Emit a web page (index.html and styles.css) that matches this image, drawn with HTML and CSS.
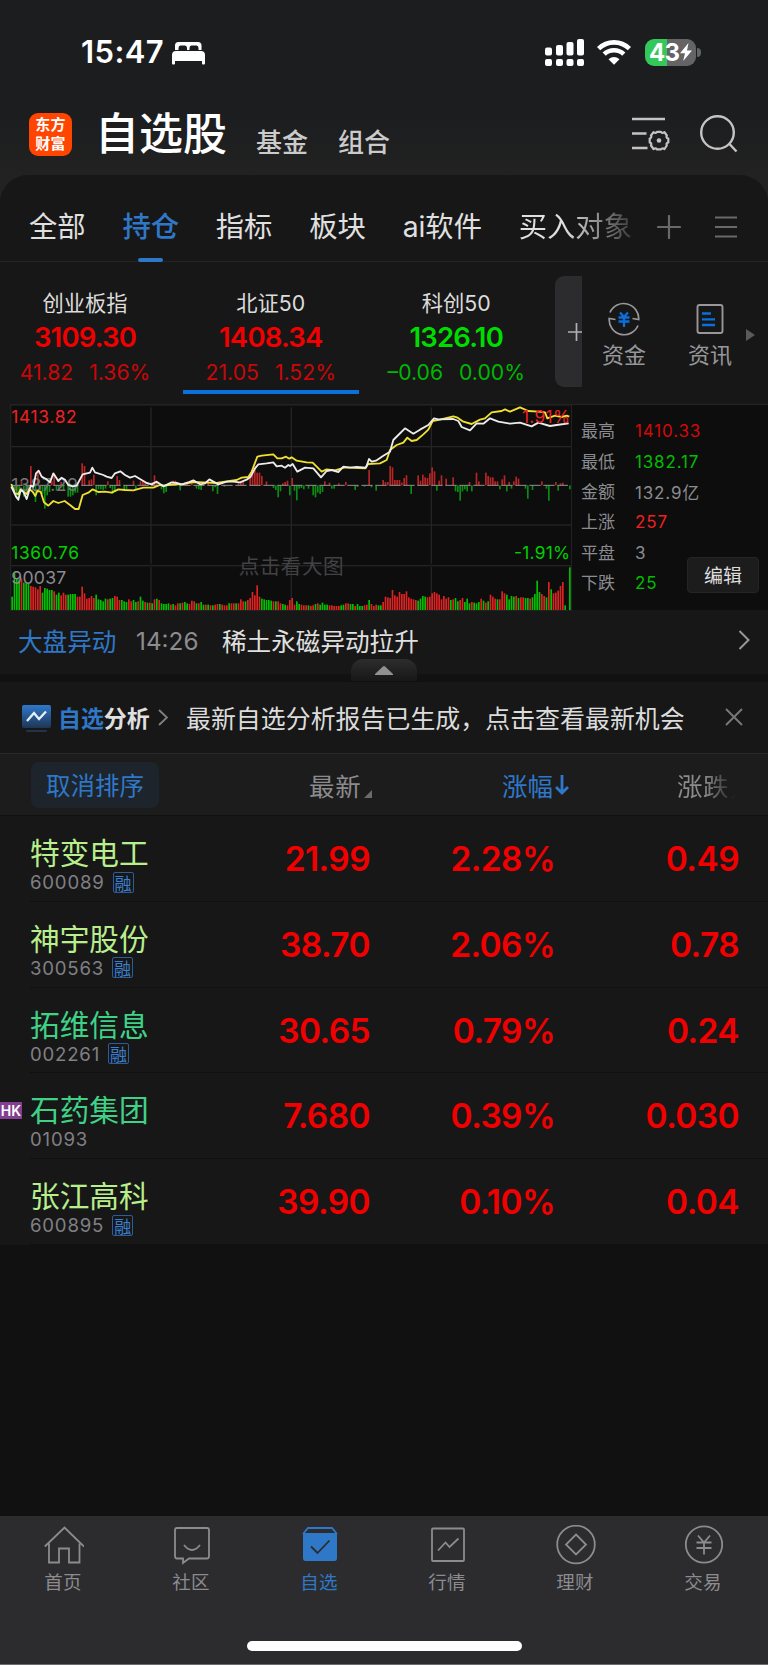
FILE: index.html
```html
<!DOCTYPE html>
<html lang="zh-CN">
<head>
<meta charset="utf-8">
<title>自选股</title>
<link rel="stylesheet" href="styles.css">
</head>
<body>
<div class="top">
  <div class="status">
    <span class="time">15:47</span>
    <svg class="bed" viewBox="0 0 33 23" width="33" height="23"><path fill="#fff" d="M3 8V3.500Q3 0 6.500 0H26Q29.500 0 29.500 3.500V8H26.500V6Q26.500 3.500 24.500 3.500H19.500Q17.500 3.500 17.500 6V8H15V6Q15 3.500 13 3.500H8.500Q6.500 3.500 6.500 6V8ZM4 9H29Q33 9 33 13V21.500Q33 22.500 32 22.500H31Q30 22.500 30 21.500V19H3V21.500Q3 22.500 2 22.500H1Q0 22.500 0 21.500V13Q0 9 4 9Z"/></svg>
    <svg class="signal" viewBox="0 0 39 27" width="39" height="27" fill="#fff"><rect x="0" y="8.500" width="7" height="8" rx="2"/><rect x="11" y="6" width="7" height="10.500" rx="2"/><rect x="21.500" y="3" width="7" height="13.500" rx="2"/><rect x="32" y="0" width="7" height="16.500" rx="2"/><rect x="0" y="20" width="7" height="7" rx="2"/><rect x="11" y="20" width="7" height="7" rx="2"/><rect x="21.500" y="20" width="7" height="7" rx="2"/><rect x="32" y="20" width="7" height="7" rx="2"/></svg>
    <svg class="wifi" viewBox="0 0 34 25" width="34" height="25"><g fill="none" stroke="#fff" stroke-width="4.600"><path d="M1.600 8.700Q8 2.400 17 2.400T32.400 8.700"/><path d="M7.200 14.200Q11.200 10.300 17 10.300T26.800 14.200"/></g><path fill="#fff" d="M11.500 19.200Q17 14.800 22.500 19.200L17 24.800Z"/></svg>
    <div class="battery"><span>43</span><svg viewBox="0 0 12 18" width="12" height="18"><path fill="#fff" d="M8.500 0L0 10.300H5L3.200 18L12 7.400H7Z"/></svg></div>
    <i class="nub"></i>
  </div>
  <div class="header">
    <div class="logo">东方<br>财富</div>
    <div class="title">自选股</div>
    <div class="sub">基金</div>
    <div class="sub">组合</div>
    <svg class="setico" viewBox="0 0 38 34" width="38" height="34" fill="none" stroke="#c4c4c4" stroke-width="2.400"><path d="M0 2H33M0 16.500H14.500M0 31H15.500"/><path stroke-width="2.200" stroke-linejoin="round" d="M21.500 15.200Q24 16.700 25 14.800H29Q30.300 16.700 32.500 15.200L34.800 18.500Q33.800 20.800 36.300 21.600V25.400Q33.800 26 34.800 28.500L32.500 32Q30.300 30.500 29 32.400H25Q24 30.500 21.500 32L19 28.500Q20 26 17.700 25.400V21.600Q20 20.800 19 18.500Z"/><circle cx="27" cy="23.500" r="2.300" fill="#c4c4c4" stroke="none"/></svg>
    <svg class="search" viewBox="0 0 38 38" width="38" height="38" fill="none" stroke="#c4c4c4" stroke-width="2.400"><circle cx="17.500" cy="17.500" r="16.300"/><path d="M29 28.500L36.500 36.500"/></svg>
  </div>
</div>
<div class="panel">
  <div class="tabs">
    <span>全部</span><span class="on">持仓</span><span>指标</span><span>板块</span><span>ai软件</span><span class="fade">买入对象</span>
    <svg class="plus" viewBox="0 0 24 24" width="24" height="24" stroke="#69696b" stroke-width="2.200" stroke-linecap="round"><path d="M1 12H23M12 1V23"/></svg>
    <svg class="menu" viewBox="0 0 22 22" width="22" height="22" stroke="#69696b" stroke-width="2.200"><path d="M0 1.500H22M0 11H22M0 20.500H22"/></svg>
  </div>
  <div class="indices">
    <div class="idx up"><b>创业板指</b><strong>3109.30</strong><p><span>41.82</span><span>1.36%</span></p></div>
    <div class="idx up sel"><b>北证50</b><strong>1408.34</strong><p><span>21.05</span><span>1.52%</span></p></div>
    <div class="idx down"><b>科创50</b><strong>1326.10</strong><p><span>–0.06</span><span>0.00%</span></p></div>
    <div class="addbox"><svg viewBox="0 0 14 18" width="14" height="18" stroke="#b0b0b2" stroke-width="1.700"><path d="M0 9H14M8.500 0V18"/></svg></div>
    <div class="tool"><svg viewBox="0 0 34 34" width="34" height="34" fill="none" stroke="#98989a" stroke-width="1.700"><path d="M3 10.500A15 15 0 0 1 31.700 17.500L25.500 16.500M31 23.500A15 15 0 0 1 2.200 16.500L8.500 17.500"/><path stroke="#0b6fdc" stroke-width="2.300" d="M13 10.500L17 15L21 10.500M11.500 15.500H22.500M11.500 19.500H22.500M17 15V25"/></svg><span>资金</span></div>
    <div class="tool second"><svg viewBox="0 0 34 34" width="34" height="34" fill="none" stroke="#98989a" stroke-width="1.900"><rect x="4.500" y="3" width="25" height="28" rx="2"/><path stroke="#0b6fdc" stroke-width="2.300" d="M9 11.500H18M9 17.300H22M9 23H22"/></svg><span>资讯</span></div>
    <svg class="more" viewBox="0 0 9 12" width="9" height="12"><path fill="#5a5a5c" d="M0 0L9 6L0 12Z"/></svg>
  </div>
  <div class="market">
    <svg id="chart" class="chart" viewBox="30 27 1686 621" width="562" height="207"></svg>
    <div class="stats">
      <div><span>最高</span><em class="r">1410.33</em></div>
      <div><span>最低</span><em class="g">1382.17</em></div>
      <div><span>金额</span><em>132.9亿</em></div>
      <div><span>上涨</span><em class="r2">257</em></div>
      <div><span>平盘</span><em>3</em></div>
      <div><span>下跌</span><em class="g">25</em></div>
      <button class="edit">编辑</button>
    </div>
  </div>
  <div class="news">
    <span class="tag">大盘异动</span><span class="at">14:26</span><span class="txt">稀土永磁异动拉升</span>
    <svg class="chev" viewBox="0 0 12 20" width="12" height="20" fill="none" stroke="#98989a" stroke-width="2"><path d="M1.500 1L10.500 10L1.500 19"/></svg>
    <div class="handle"><svg viewBox="0 0 18 9" width="18" height="9"><path fill="#919193" d="M0 9V8L8 .5Q9 -.4 10 .5L18 8V9Z"/></svg></div>
  </div>
  <div class="analysis">
    <svg class="aico" viewBox="0 0 29 28" width="29" height="28"><defs><linearGradient id="ag" x2="0" y2="1"><stop stop-color="#2f78cc"/><stop offset="1" stop-color="#1e3552"/></linearGradient></defs><rect width="29" height="23" rx="2" fill="url(#ag)"/><rect x="4" y="25" width="21" height="2" rx="1" fill="#20354b"/><path d="M5 16L12 8L17 14L24 6.500" fill="none" stroke="#e8eef5" stroke-width="2.300"/></svg>
    <span class="name"><i>自选</i>分析</span>
    <svg class="chev2" viewBox="0 0 10 17" width="10" height="17" fill="none" stroke="#808082" stroke-width="1.900"><path d="M1 1L9 8.500L1 16"/></svg>
    <span class="msg">最新自选分析报告已生成，点击查看最新机会</span>
    <svg class="close" viewBox="0 0 18 18" width="18" height="18" stroke="#77777a" stroke-width="2"><path d="M1 1L17 17M17 1L1 17"/></svg>
  </div>
  <div class="cols">
    <span class="cancel">取消排序</span>
    <span class="c1">最新<svg viewBox="0 0 8 8" width="8" height="8"><path fill="#6b6b6d" d="M8 0V8H0Z"/></svg></span>
    <span class="c2">涨幅<svg viewBox="0 0 14 20" width="14" height="20" fill="none" stroke="#2f78cc" stroke-width="2.800"><path d="M7 0V18M1 12L7 18L13 12"/></svg></span>
    <span class="c3">涨跌<svg viewBox="0 0 8 8" width="8" height="8"><path fill="#6b6b6d" d="M8 0V8H0Z"/></svg></span>
  </div>
  <div class="row"><div class="stock"><b>特变电工</b><p>600089<i>融</i></p></div><span>21.99</span><span>2.28%</span><span>0.49</span></div>
  <div class="row"><div class="stock"><b>神宇股份</b><p>300563<i>融</i></p></div><span>38.70</span><span>2.06%</span><span>0.78</span></div>
  <div class="row"><div class="stock alt"><b>拓维信息</b><p>002261<i>融</i></p></div><span>30.65</span><span>0.79%</span><span>0.24</span></div>
  <div class="row"><u class="hk">HK</u><div class="stock alt"><b>石药集团</b><p>01093</p></div><span>7.680</span><span>0.39%</span><span>0.030</span></div>
  <div class="row"><div class="stock"><b>张江高科</b><p>600895<i>融</i></p></div><span>39.90</span><span>0.10%</span><span>0.04</span></div>
</div>
<div class="dock">
  <div class="items">
    <div><svg viewBox="0 0 40 40" width="40" height="40"><path d="M.800 21.500L20.500 2.500L40 21.500M5 18.500V37.500H15V23.500H25V37.500H35.500V18.500"/></svg><span>首页</span></div>
    <div><svg viewBox="0 0 40 40" width="40" height="40"><path d="M5 3H35Q37 3 37 5V31Q37 33.500 35 33.500H17L11 38V33.500H5Q3 33.500 3 31V5Q3 3 5 3Z"/><path d="M12 20Q20 30 28 20"/></svg><span>社区</span></div>
    <div class="on"><svg viewBox="0 0 40 40" width="40" height="40"><path d="M3 9L8 3H32L37 9"/><path d="M3 8H37V33Q37 36 34.500 36H5.500Q3 36 3 33Z" fill="#2f78c8" stroke="none"/><path d="M11 21.500L17.500 28L29.500 15.500" stroke="#2c2c2e"/></svg><span>自选</span></div>
    <div><svg viewBox="0 0 40 40" width="40" height="40"><rect x="4" y="3.500" width="32" height="32.500" rx="1"/><path d="M10 25.500L17.500 17.500L21.500 22L30.500 13.500"/></svg><span>行情</span></div>
    <div><svg viewBox="0 0 40 40" width="40" height="40"><circle cx="20" cy="19.500" r="18.800"/><path d="M20 9.500L30 19.500L20 29.500L10 19.500Z"/></svg><span>理财</span></div>
    <div><svg viewBox="0 0 40 40" width="40" height="40"><circle cx="20" cy="19.500" r="18.200"/><path d="M14 10.500L20 17.500L26 10.500M12.500 17.500H27.500M12.500 23H27.500M20 17.500V29.500"/></svg><span>交易</span></div>
  </div>
  <div class="home"></div>
</div>
<script src="chart.js"></script>
</body>
</html>
```
FILE: styles.css
```css
* { box-sizing: border-box; }
body { margin: 0; width: 768px; height: 1665px; display: flex; flex-direction: column; overflow: hidden; background: #111; color: #e0e0e0; font-family: Inter, "Noto Sans CJK SC", sans-serif; }
p { margin: 0; }
b, strong, i, em, u { font-weight: 400; font-style: normal; text-decoration: none; }
svg { display: block; flex: none; }
span, b { white-space: nowrap; }
.top { height: 203px; flex: none; background: linear-gradient(#1c1d1f, #1c1d1f 55%, #222222 88%); }
.status { height: 104px; display: flex; padding: 0 0 0 81px; align-items: center; }
.time { width: 91px; font-size: 31px; font-weight: 600; color: #fff; line-height: 36px; letter-spacing: .4px; }
.bed { margin-top: 2px; }
.signal { margin-left: 340px; }
.wifi { margin-left: 13px; }
.battery { margin-left: 14px; width: 51px; height: 27px; border-radius: 9px; background: linear-gradient(90deg, #34c759 43%, #646466 43%); display: flex; align-items: center; padding-left: 4px; color: #fff; font-size: 24px; font-weight: 700; line-height: 27px; }
.battery span { width: 31px; letter-spacing: -.8px; }
.nub { width: 4px; height: 9px; margin-left: 1px; background: #646466; border-radius: 0 4px 4px 0; }
.header { height: 71px; display: flex; padding-left: 29px; align-items: flex-start; }
.logo { margin-top: 9px; width: 43px; height: 43px; border-radius: 9px; background: #ff4500; color: #fff; font-size: 15px; font-weight: 700; line-height: 18.500px; text-align: center; padding-top: 3px; letter-spacing: .3px; }
.title { margin: -3px 0 0 23px; width: 135px; font: 500 44px/60px "Noto Sans CJK SC", sans-serif; color: #fff; white-space: nowrap; }
.sub { margin: 17px 0 0 26px; width: 56px; font: 500 26px/40px "Noto Sans CJK SC", sans-serif; color: #cbcbcb; }
.setico { margin: 13px 0 0 238px; }
.search { margin: 11px 0 0 30px; }
.panel { margin-top: -28px; background: #171717; border-radius: 28px 28px 0 0; flex: none; height: 1070px; }
.tabs { height: 87px; display: flex; align-items: center; gap: 36.800px; padding: 17px 0 0 29px; border-bottom: 1px solid #242424; font: 400 28.300px/40px Inter, "Noto Sans CJK SC", sans-serif; }
.tabs .on { color: #2f78c8; font-weight: 500; position: relative; }
.tabs .on::after { content: ""; position: absolute; left: 16px; bottom: -15px; width: 25px; height: 4px; border-radius: 2px; background: #2f78c8; }
.fade { background: linear-gradient(90deg, #e0e0e0 40%, #3a3a3a); -webkit-background-clip: text; background-clip: text; color: transparent; }
.plus { margin-left: -12px; }
.menu { margin-left: -3px; }
.indices { height: 142px; display: flex; }
.idx { width: 185.500px; display: flex; flex-direction: column; align-items: center; padding-top: 26px; position: relative; }
.idx:first-child { width: 170px; margin-right: 8px; }
.idx b { font-size: 21.300px; line-height: 30px; color: #dcdcdc; }
.idx strong { font-size: 27.500px; font-weight: 600; line-height: 34px; margin-top: 2px; letter-spacing: -.8px; }
.idx p { font-size: 21.200px; line-height: 26px; margin-top: 5px; display: flex; gap: 16px; }
.up { color: #f00000; } .up p { color: #c80808; }
.down { color: #00dc00; } .down p { color: #00b800; }
.sel::after { content: ""; position: absolute; left: 5px; top: 128px; width: 176px; height: 4px; background: #0b6fdc; }
.addbox { margin: 14px 0 0 6px; width: 27px; height: 111px; border-radius: 9px 0 0 9px; background: #2c2c2e; display: flex; align-items: center; justify-content: flex-end; }
.tool { margin-left: 18px; width: 48px; padding-top: 40px; display: flex; flex-direction: column; align-items: center; font-size: 22px; line-height: 32px; color: #98989a; }
.tool span { margin-top: 3px; }
.tool.second { margin-left: 38px; }
.more { margin: 67px 0 0 12px; }
.market { height: 206px; display: flex; background: linear-gradient(#0d0d0d, #0d0d0d) 10px 0 / 758px 206px no-repeat; padding-left: 10px; }
.stats { position: relative; padding-top: 11px; border-top: 1px solid #242424; flex: 1; }
.stats div { display: flex; height: 30.400px; align-items: center; padding-left: 9px; font-size: 17px; color: #8b8b90; }
.stats span { width: 54px; margin-top: -3px; }
.stats em { letter-spacing: .85px; }
.r { color: #d40808; } .r2 { color: #ee2020; } .g { color: #00bf00; }
.edit { position: absolute; left: 115px; top: 152px; width: 72px; height: 36px; border: 1px solid #252525; border-radius: 4px; background: #1c1c1c; color: #dedede; font: 19px/32px "Noto Sans CJK SC", sans-serif; padding: 0; }
.news { height: 72px; padding: 0 18px 4px 18px; display: flex; align-items: center; font-size: 24.600px; border-bottom: 8px solid #111; position: relative; }
.tag { color: #2f78c8; width: 118px; }
.at { color: #8b8b90; width: 86px; font-size: 24.300px; margin-top: 2px; }
.chev { margin-left: auto; }
.handle { position: absolute; left: 351px; top: 49px; width: 66px; height: 22px; border-radius: 12px 12px 0 0; background: linear-gradient(#2d2d2e, #171717); display: flex; justify-content: center; padding-top: 7px; }
.analysis { height: 71px; padding: 0 0 1px 22px; display: flex; align-items: center; }
.aico { margin-top: 4px; }
.name { margin-left: 7px; width: 100px; font-size: 22.900px; font-weight: 700; }
.name i { font-weight: 700; color: #2f78c8; }
.msg { margin-left: 18px; width: 539px; font-size: 24.950px; color: #dcdcdc; }
.cols { height: 63px; background: #1c1c1c; border-top: 1px solid #292929; border-bottom: 1px solid #111; display: flex; align-items: center; padding-left: 31px; font-size: 25.500px; color: #8b8b8d; }
.cols > span { display: flex; align-items: center; }
.cancel { width: 128px; height: 46px; border-radius: 8px; background: #1d242c; color: #2f78c8; font-size: 24.500px; justify-content: center; }
.c1 { width: 64px; margin-left: 150px; letter-spacing: .8px; }
.c1 svg, .c3 svg { margin: 18px 0 0 2px; }
.c2 { width: 67px; margin-left: 129px; color: #2f78c8; }
.c2 svg { margin: 0 0 0 2px; }
.c3 { margin-left: 108px; letter-spacing: .5px; -webkit-mask-image: linear-gradient(90deg, #000 45%, transparent 95%); mask-image: linear-gradient(90deg, #000 45%, transparent 95%); }
.row { height: 85.800px; display: flex; position: relative; padding-left: 30px; background: linear-gradient(#101010, #101010) 30px 100% / 738px 1px no-repeat; }
.row > span { width: 184px; text-align: right; color: #f00000; font-size: 33.500px; font-weight: 600; line-height: 44px; padding-top: 21px; letter-spacing: -.6px; }
.row > span:nth-last-child(2) { width: 185px; }
.stock { width: 156px; padding-top: 16px; }
.stock b { display: block; font-size: 29.700px; line-height: 42px; color: #b8ee8c; }
.stock p { display: flex; align-items: center; font-size: 18.600px; line-height: 22px; letter-spacing: .8px; color: #808085; margin-top: -3px; }
.stock i { margin-left: 8px; width: 21px; height: 21px; border: 1px solid #2d5d98; border-radius: 2px; font: 17px/19px "Noto Sans CJK SC", sans-serif; color: #3a80d2; letter-spacing: 0; text-align: center; }
.alt b { color: #3fd287; }
.hk { position: absolute; left: 0; top: 29px; width: 22px; height: 17px; background: #843f92; color: #fff; font-size: 14px; line-height: 17px; font-weight: 600; text-align: center; }
.dock { margin-top: auto; height: 149px; flex: none; background: #2c2c2e; border-bottom: 1px solid #6c6c6e; display: flex; flex-direction: column; align-items: center; }
.items { width: 768px; height: 125px; display: flex; }
.items div { width: 128px; padding-top: 9px; display: flex; flex-direction: column; align-items: center; color: #8b8b90; font-size: 18.500px; line-height: 28px; }
.items svg { fill: none; stroke: #8b8b90; stroke-width: 1.800; }
.items .on { color: #2f78c8; }
.items .on svg { stroke: #2f78c8; }
.items span { margin: 3px 2px 0 0; letter-spacing: .3px; }
.home { width: 275px; height: 10px; border-radius: 5px; background: #fff; }
```
FILE: chart.js
```js
const svg = document.getElementById("chart");
let out = "";
const rect = (x, y, w, h, f) => { out += `<rect x="${x}" y="${y}" width="${w}" height="${h}" fill="${f}"/>`; };
const text = (x, y, s, w, f, size) => { out += `<text x="${x}" y="${y}" textLength="${w}" fill="${f}" font-size="${size}">${s}</text>`; };

// frame and grid
rect(30, 27, 1686, 5, "#222");
rect(30, 27, 4, 621, "#222");
rect(1713, 27, 3, 621, "#222");
rect(30, 645, 1686, 3, "#222");
[153, 388, 510].forEach(y => rect(34, y, 1680, 4, "#242426"));
[451, 872, 1292].forEach(x => { rect(x, 37, 4, 470, "#242426"); rect(x, 516, 4, 130, "#242426"); });
text(716, 536, "点击看大图", 315, "#424244", 62);

// traded volume, one bar per minute
const vol = [40,110,95,92,95,82,80,78,72,70,68,62,72,52,66,64,60,60,56,46,52,44,52,46,46,48,48,48,40,40,70,50,34,36,42,36,46,32,30,26,34,32,34,36,42,40,30,30,26,24,32,26,30,24,26,40,28,24,22,22,20,32,34,30,20,18,18,20,16,18,14,20,20,22,24,20,18,28,26,20,20,24,16,16,16,14,14,16,18,18,16,14,14,20,20,20,20,20,32,26,26,30,36,54,44,74,40,34,32,30,30,28,26,26,26,20,18,16,14,30,36,16,26,18,16,14,14,14,12,14,18,20,16,22,16,16,14,14,12,12,12,14,16,20,20,18,18,12,18,12,12,14,16,30,18,12,16,14,14,24,40,38,36,60,44,40,54,48,48,56,38,34,32,30,28,34,42,40,38,40,50,54,50,46,32,42,34,38,30,32,36,26,30,36,24,34,20,24,22,20,24,34,28,22,26,46,40,34,32,32,56,50,46,32,42,40,42,36,38,38,36,36,34,38,48,88,54,48,42,38,84,62,50,52,58,72,84,14,0,128];
const cols = "GGGGRGGGRRRRRGGGGGRGGRRRGGGGRRRRRRRRGGGGGRGGRRRGGGRRGGRGGRGRGRGRGGGGRGRRGRGGRRRGRGGRGRGRRGRRRGRRGRRRGRRRRRRGGGGGRGRRGGRRRRGGRRRGRRGRGGGGRRRRRGGRRGGRGGGRRGRRRGGRRRRRRRRRRRRRRRGGGGRRRRRRRRRRGRGGRRGGGRGGGRGRGRRRGRRRGGGGRGRRGGRGGGGRRGRGRRRRRGGGGRGRRRGG";
vol.forEach((h, i) => rect(34 + i * 7, 645 - h, 5, h, cols[i] === "G" || i === 239 ? "#00c000" : "#dd2222"));

// momentum bars around the previous close
const mom = {1:-14,2:-40,3:-30,4:12,5:-34,6:-20,8:58,9:-14,10:-50,11:40,12:-14,13:-26,14:-70,15:-30,16:-20,17:12,18:35,19:-16,20:-12,21:10,22:-14,24:-34,25:-34,26:-30,27:-22,28:-22,30:66,31:58,33:15,34:18,35:32,36:-30,37:-12,38:-12,39:-14,40:-10,41:12,42:-8,43:-25,44:-20,45:28,46:16,48:-12,49:-14,52:14,53:-12,55:12,56:14,57:8,60:10,61:30,62:8,64:-12,65:-24,66:-20,69:14,70:14,72:-15,75:12,77:14,79:-10,80:-12,81:-14,84:14,86:-18,87:-6,88:-26,91:-4,97:8,98:10,99:10,102:34,103:44,104:50,105:38,106:38,107:28,109:12,112:-8,113:-14,114:-36,115:-18,116:6,117:10,118:14,119:-30,120:22,121:-16,122:-45,123:-10,124:-8,125:-12,127:-10,129:-30,130:-36,131:-22,132:-26,133:-20,134:12,136:8,137:-10,138:-10,140:6,143:10,147:-14,148:-5,151:-4,153:46,154:-6,156:-16,159:16,160:10,161:10,162:58,163:54,164:16,165:16,166:16,167:8,168:22,169:30,171:-26,174:30,175:14,176:32,177:24,178:22,179:36,180:54,181:42,182:-16,183:14,184:30,186:20,189:24,190:-18,191:-20,192:-46,193:-18,194:-12,195:-18,196:10,197:-18,199:38,200:12,203:38,204:28,205:24,206:24,207:12,208:12,209:-12,210:18,211:30,212:-18,213:10,214:-10,215:12,216:26,217:20,220:-10,221:-40,223:-14,227:12,229:-10,230:-46,233:10,234:-16,235:6,236:8,239:-12};
Object.entries(mom).forEach(([i, h]) => rect(34 + i * 7, h > 0 ? 271 - h : 271, 5, Math.abs(h), h > 0 ? "#b82424" : "#0a8c14"));
out += '<path d="M34 271H1704" stroke="#919194" stroke-width="3" stroke-dasharray="34 8" fill="none"/>';
text(34, 289, "1387.29", 200, "#747479", 53);

const line = (a, b, color) => {
  const left = a.trim().split(" ");
  const right = b.trim().split(" ").map(p => { const [x, y] = p.split(","); return (+x + 870) + "," + y; });
  out += `<polyline points="${left.concat(right).join(" ")}" fill="none" stroke="${color}" stroke-width="5.500" stroke-linejoin="round"/>`;
};
line("34,267 45,295 55,297 62,283 70,290 80,297 88,282 98,290 106,303 112,288 122,290 132,322 145,332 160,318 175,324 194,318 210,330 225,342 236,342 248,300 265,293 278,283 295,291 315,290 335,293 355,283 375,285 400,286 430,278 460,278 480,270 495,272 520,268 545,268 580,261 610,262 650,264 690,258 710,255 725,248 745,246 755,230 772,185 785,182 820,178 832,190 845,190 858,185 868,191",
  "5,187 20,197 50,202 68,203 95,230 110,223 135,226 165,217 225,220 235,207 270,205 290,195 300,165 320,150 340,143 352,128 365,138 380,135 400,118 415,104 428,78 450,74 490,64 503,68 520,80 545,87 570,74 585,70 605,52 635,48 645,43 660,50 690,37 715,48 745,50 765,52 772,70 795,62 815,66 830,62 838,65", "#f0e130");
line("34,275 48,305 55,314 62,285 70,290 80,312 92,272 100,275 108,235 116,227 125,245 138,252 150,262 160,235 175,258 185,248 195,254 205,270 218,274 230,272 248,238 270,233 277,218 285,232 310,240 320,245 335,249 345,235 361,229 375,240 390,248 405,243 425,255 440,264 455,268 470,260 490,274 515,262 530,264 545,268 560,264 580,256 600,268 615,265 628,253 655,268 680,260 700,260 720,262 740,254 752,245 765,220 775,208 800,205 820,202 830,214 845,212 855,218 865,210",
  "0,213 8,207 22,230 45,218 70,220 93,247 110,228 125,225 145,231 160,215 180,218 200,216 228,218 237,192 245,200 258,197 280,182 300,170 310,135 325,120 345,100 370,116 390,104 415,90 432,70 445,73 490,72 505,78 515,96 540,106 560,85 580,86 600,70 625,80 660,86 690,83 725,94 745,83 780,93 800,90 836,85", "#ececec");

// axis labels
text(34, 85, "1413.82", 196, "#ee2222", 52);
text(34, 491, "1360.76", 203, "#00d000", 52);
text(34, 568, "90037", 165, "#8b8b90", 53);
text(1566, 85, "1.91%", 144, "#ee2222", 52);
text(1542, 491, "-1.91%", 168, "#00d000", 52);
svg.innerHTML = out;
```
